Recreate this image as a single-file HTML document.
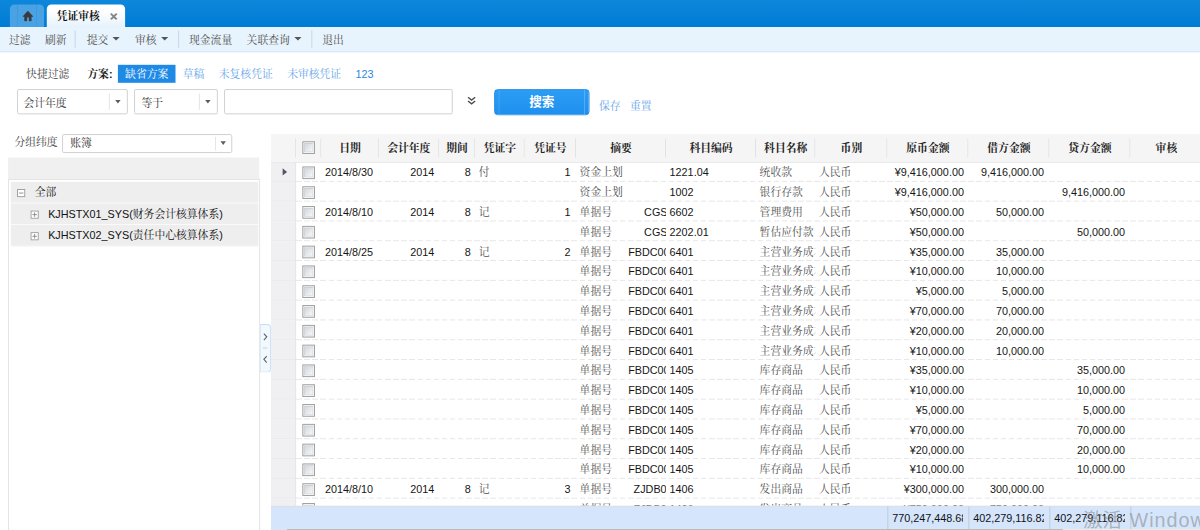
<!DOCTYPE html>
<html lang="zh-CN"><head><meta charset="utf-8"><title>凭证审核</title>
<style>
html,body{margin:0;padding:0;}
html{width:1200px;height:530px;overflow:hidden;background:#fff;}
body{width:1200px;height:530px;overflow:hidden;position:relative;}
#root{position:absolute;left:0;top:0;width:1334px;height:589px;transform:scale(0.9);transform-origin:0 0;overflow:hidden;
 font-family:"Liberation Sans","Noto Serif CJK SC",sans-serif;font-size:12px;color:#333;background:#fff;}
#root *{box-sizing:border-box;}
.abs{position:absolute;white-space:nowrap;}
.topbar{position:absolute;left:0;top:0;width:1334px;height:30px;background:linear-gradient(#0c87db,#007bd4);}
.hometab{position:absolute;left:11px;top:4.5px;width:38px;height:25.5px;background:#48a2e3;border-radius:5px 5px 0 0;}
.hometab:before,.hometab:after{content:"";position:absolute;top:0;width:1px;height:25.5px;background:rgba(0,90,180,.13);}
.hometab:before{left:8px}.hometab:after{right:8px}
.tab{position:absolute;left:51.7px;top:4.5px;width:87.3px;height:25.5px;border-radius:5px 5px 0 0;background:linear-gradient(#fff 30%,#e6f2fc);}
.tab span{position:absolute;left:11.3px;top:5.7px;font-weight:bold;color:#111;font-size:12px;line-height:16px;}
.tab svg{position:absolute;left:70.1px;top:9.2px;}
.toolbar{position:absolute;left:0;top:30px;width:1334px;height:27.8px;background:#e8f4fd;border-bottom:1px solid #d2e2f7;}
.toolbar span{position:absolute;top:0;line-height:30px;white-space:nowrap;color:#505050;}
.toolbar i.sep{position:absolute;top:3.5px;width:1px;height:19.5px;background:#c3d3e3;}
.toolbar i.dd{position:absolute;top:11px;width:0;height:0;border:4px solid transparent;border-top:4.5px solid #555;border-bottom:0;}
.f1{position:absolute;top:73px;line-height:20px;white-space:nowrap;}
.chip{color:#fff;padding:0 8px;}
.chipbg{position:absolute;left:131px;top:72px;width:64px;height:20px;background:#1e8ae6;}
.lnk{color:#68a6ea;}
.sel{position:absolute;border:1px solid #ccc;border-radius:2px;background:#fff;}
.sel span{position:absolute;left:6px;top:1.6px;white-space:nowrap;}
.sel i.s{position:absolute;top:4px;bottom:4px;right:19px;width:1px;background:#e2e2e2;}
.sel i.a{position:absolute;right:7px;top:50%;margin-top:-2px;width:0;height:0;border:3.5px solid transparent;border-top:4.5px solid #5c5c5c;border-bottom:0;}
.btn{position:absolute;left:549.4px;top:99px;width:105.2px;height:28.8px;border-radius:4px;background:linear-gradient(#2b9df5,#1e8fee);border:1px solid #1c86e0;color:#fff;font-weight:bold;font-size:14px;line-height:26.5px;text-align:center;font-family:"Liberation Sans","Noto Sans CJK SC",sans-serif;}
.btn:after{content:"";position:absolute;right:3.5px;top:0;bottom:0;width:1px;background:rgba(255,255,255,.25);}
.btn:before{content:"";position:absolute;left:4px;top:0;bottom:0;width:1px;background:rgba(255,255,255,.15);}
/* left panel */
.band{position:absolute;left:9px;top:175px;width:278.8px;height:24px;background:#f0f0f0;}
.tree{position:absolute;left:9px;top:199px;width:280.2px;height:400px;border:1px solid #e2e2e2;background:#fff;}
.tr{position:absolute;left:1.5px;right:1px;height:24px;background:#eee;border-bottom:1px solid #fbfbfb;white-space:nowrap;}
.tr span{position:absolute;top:0;line-height:25.5px;color:#111;}
.tr i{position:absolute;top:7.6px;width:9px;height:9px;border:1px solid #999;background:#fff;}
.tr i:before{content:"";position:absolute;left:1px;right:1px;top:3px;height:1px;background:#888;}
.tr i.p:after{content:"";position:absolute;top:1px;bottom:1px;left:3px;width:1px;background:#888;}
.split{position:absolute;left:288.6px;top:360.3px;width:12.6px;height:53.4px;border:1px solid #c3def7;border-left-color:#d4e8fa;border-radius:0 4px 4px 0;background:#f2f9fe;}
/* grid */
.grid{position:absolute;left:301px;top:149px;width:1040px;height:440px;overflow:hidden;}
.ghead{position:absolute;left:0;top:0;width:1040px;height:31.7px;background:#f5f5f5;border-bottom:1px solid #e9e9e9;z-index:2;}
.hc{position:absolute;top:0;height:30px;text-align:center;line-height:33.6px;font-weight:bold;color:#222;white-space:nowrap;overflow:hidden;}
.hc:after{content:"";position:absolute;right:0;top:5px;bottom:4px;width:1px;background:#e0e0e0;}
.gbody{position:absolute;left:0;top:31px;width:1040px;height:382px;overflow:hidden;}
.row{position:absolute;left:0;width:1040px;height:22px;}
.row:after{content:"";position:absolute;left:28px;right:0;bottom:0;height:1px;background:repeating-linear-gradient(90deg,#e4e4e4 0,#e4e4e4 6px,transparent 6px,transparent 9px);}
.c{position:absolute;top:0;height:22px;line-height:25.5px;padding:0 5px 0 4px;white-space:nowrap;overflow:hidden;color:#151515;}
.c.r{text-align:right}.c.l{text-align:left}
.c.ind{left:0;width:28px;background:#f0f0f3;border-right:1px solid #e4e4e4;border-bottom:1px solid #e8e8e8;padding:0;}
.c.cbc{left:28px;width:28px;padding:0;}
.cb{position:absolute;left:6.5px;top:4.7px;width:14px;height:14px;border:1px solid #98999a;background:#f4f4f4;}
.cb:after{content:"";position:absolute;left:1px;top:1px;right:1px;bottom:1px;border:1px solid #c9cdd1;border-right-color:#dde0e3;border-bottom-color:#dde0e3;background:linear-gradient(135deg,#d3d7dc,#f7f7f7);}
.hcb{top:8.3px;}
.arrow{position:absolute;left:12.5px;top:7.2px;width:0;height:0;border:4px solid transparent;border-left:5px solid #556;border-right:0;}
.zy b{position:absolute;top:0;font-weight:normal;color:#151515;}
.c.cj{color:#505050;}
.gfoot{position:absolute;left:0;top:413px;width:1040px;height:26px;background:#d4e5fc;border-top:1px solid #e0e0e0;}
.fc{position:absolute;top:0;height:25px;line-height:26.6px;padding:0 5.7px 0 4.3px;overflow:hidden;white-space:nowrap;color:#111;border-left:1px solid #bfc6d2;}
.hscroll{position:absolute;left:0;top:439px;width:1040px;height:3px;background:#e6e6e6;}
.hscroll:after{content:"";position:absolute;left:18px;top:0;width:862px;height:3px;background:#b0b0b0;}
.hscroll:before{content:"";position:absolute;left:0;top:0;width:18px;height:3px;background:#d4e5fc;}
.wm{position:absolute;left:1203.5px;top:562px;font-size:21.5px;line-height:32px;color:rgba(125,125,125,.52);white-space:nowrap;font-family:"Liberation Sans","Noto Sans CJK SC",sans-serif;}
.fc span{display:block;overflow:hidden;white-space:nowrap;}
.wm b{font-weight:normal;font-size:22px;letter-spacing:1.1px;margin-left:2.5px}

</style></head>
<body>
<div id="root">
<div class="topbar">
 <div class="hometab"><svg width="12" height="11.5" viewBox="0 0 14 12" preserveAspectRatio="none" style="position:absolute;left:13.9px;top:7.7px"><path d="M7 0 L14.2 6.9 H11.7 V12 H8.3 V7.9 H5.9 V12 H2.3 V6.9 H-0.2 Z" fill="#3a3a3a"/></svg></div>
 <div class="tab"><span>凭证审核</span><svg width="8.8" height="8.8" viewBox="0 0 8 8"><path d="M1 1 L7 7 M7 1 L1 7" stroke="#858585" stroke-width="1.9"/></svg></div>
</div>
<div class="toolbar">
 <span style="left:10px">过滤</span><span style="left:50px">刷新</span><i class="sep" style="left:83px"></i>
 <span style="left:96.3px">提交</span><i class="dd" style="left:125px"></i>
 <span style="left:150px">审核</span><i class="dd" style="left:179px"></i><i class="sep" style="left:198px"></i>
 <span style="left:210px">现金流量</span><span style="left:274px">关联查询</span><i class="dd" style="left:327px"></i><i class="sep" style="left:346px"></i>
 <span style="left:358px">退出</span>
</div>
<div class="f1" style="left:29px;color:#444">快捷过滤</div>
<div class="f1" style="left:97px;font-weight:bold;color:#222">方案:</div>
<div class="chipbg"></div>
<div class="f1" style="left:131px"><span class="chip">缺省方案</span><span class="lnk" style="padding:0 8px">草稿</span><span class="lnk" style="padding:0 8px">未复核凭证</span><span class="lnk" style="padding:0 8px">未审核凭证</span><span class="lnk" style="padding:0 8px;color:#2a88e0">123</span></div>
<div class="sel" style="left:19px;top:99px;width:123px;height:28px;line-height:26px"><span>会计年度</span><i class="s"></i><i class="a"></i></div>
<div class="sel" style="left:149px;top:99px;width:93px;height:28px;line-height:26px"><span style="left:7.3px">等于</span><i class="s"></i><i class="a"></i></div>
<div class="sel" style="left:249px;top:99px;width:254px;height:28px"></div>
<svg width="10" height="10" viewBox="0 0 10 10" style="position:absolute;left:518.7px;top:107.1px"><path d="M1 1 L5 4.2 L9 1 M1 5.2 L5 8.4 L9 5.2" fill="none" stroke="#4c4c4c" stroke-width="1.5"/></svg>
<div class="btn">搜索</div>
<div class="abs lnk" style="left:665.5px;top:108px;line-height:20px">保存</div>
<div class="abs lnk" style="left:700px;top:108px;line-height:20px">重置</div>
<div class="abs" style="left:16px;top:147.5px;line-height:20px;color:#444">分组纬度</div>
<div class="sel" style="left:69px;top:149px;width:189px;height:20.5px;line-height:18px"><span style="left:8px;top:0.3px">账簿</span><i class="s" style="top:2px;bottom:2px;right:17.5px"></i><i class="a" style="right:6.2px"></i></div>
<div class="band"></div>
<div class="tree">
 <div class="tr" style="top:2.4px"><i style="left:7px"></i><span style="left:27px">全部</span></div>
 <div class="tr" style="top:26.4px"><i class="p" style="left:22px"></i><span style="left:42px">KJHSTX01_SYS(财务会计核算体系)</span></div>
 <div class="tr" style="top:50.4px"><i class="p" style="left:22px"></i><span style="left:42px">KJHSTX02_SYS(责任中心核算体系)</span></div>
</div>
<div class="split"><svg width="11" height="52" viewBox="0 0 11 52" style="position:absolute;left:0;top:0"><path d="M3.2 9.8 L6.4 13.3 L3.2 16.8" fill="none" stroke="#666" stroke-width="1.3"/><path d="M6.4 34.8 L3.2 38.3 L6.4 41.8" fill="none" stroke="#666" stroke-width="1.3"/><path d="M2 25.7 H7" stroke="#c8c8c8" stroke-width="1"/></svg></div>
<div class="grid">
<div class="ghead"><div class="hc ind" style="left:0px;width:28px"></div><div class="hc" style="left:28px;width:28px"><i class="cb hcb"></i></div><div class="hc" style="left:56px;width:64px"><span>日期</span></div><div class="hc" style="left:120px;width:66.5px"><span>会计年度</span></div><div class="hc" style="left:186.5px;width:40.5px"><span>期间</span></div><div class="hc" style="left:227.0px;width:55px"><span>凭证字</span></div><div class="hc" style="left:282.0px;width:57px"><span>凭证号</span></div><div class="hc" style="left:339.0px;width:100px"><span>摘要</span></div><div class="hc" style="left:439.0px;width:100px"><span>科目编码</span></div><div class="hc" style="left:539.0px;width:66px"><span>科目名称</span></div><div class="hc" style="left:605.0px;width:80px"><span>币别</span></div><div class="hc" style="left:685.0px;width:90px"><span>原币金额</span></div><div class="hc" style="left:775.0px;width:90px"><span>借方金额</span></div><div class="hc" style="left:865.0px;width:90px"><span>贷方金额</span></div><div class="hc" style="left:955.0px;width:80px"><span>审核</span></div></div>
<div class="gbody">
<div class="row" style="top:0px"><div class="c ind"><i class="arrow"></i></div><div class="c cbc"><i class="cb"></i></div><div class="c l" style="left:56px;width:64px">2014/8/30</div><div class="c r" style="left:120px;width:66.5px">2014</div><div class="c r" style="left:186.5px;width:40.5px">8</div><div class="c l cj" style="left:227.0px;width:55px">付</div><div class="c r" style="left:282.0px;width:57px;padding-right:6px">1</div><div class="c l zy cj" style="left:339.0px;width:100px">资金上划</div><div class="c l" style="left:439.0px;width:100px">1221.04</div><div class="c l cj" style="left:539.0px;width:66px">统收款</div><div class="c l cj" style="left:605.0px;width:80px">人民币</div><div class="c r" style="left:685.0px;width:90px">¥9,416,000.00</div><div class="c r" style="left:775.0px;width:90px;padding-right:6px">9,416,000.00</div><div class="c r" style="left:865.0px;width:90px;padding-right:6px"></div><div class="c l" style="left:955.0px;width:80px"></div></div>
<div class="row" style="top:22px"><div class="c ind"></div><div class="c cbc"><i class="cb"></i></div><div class="c l" style="left:56px;width:64px"></div><div class="c r" style="left:120px;width:66.5px"></div><div class="c r" style="left:186.5px;width:40.5px"></div><div class="c l cj" style="left:227.0px;width:55px"></div><div class="c r" style="left:282.0px;width:57px;padding-right:6px"></div><div class="c l zy cj" style="left:339.0px;width:100px">资金上划</div><div class="c l" style="left:439.0px;width:100px">1002</div><div class="c l cj" style="left:539.0px;width:66px">银行存款</div><div class="c l cj" style="left:605.0px;width:80px">人民币</div><div class="c r" style="left:685.0px;width:90px">¥9,416,000.00</div><div class="c r" style="left:775.0px;width:90px;padding-right:6px"></div><div class="c r" style="left:865.0px;width:90px;padding-right:6px">9,416,000.00</div><div class="c l" style="left:955.0px;width:80px"></div></div>
<div class="row" style="top:44px"><div class="c ind"></div><div class="c cbc"><i class="cb"></i></div><div class="c l" style="left:56px;width:64px">2014/8/10</div><div class="c r" style="left:120px;width:66.5px">2014</div><div class="c r" style="left:186.5px;width:40.5px">8</div><div class="c l cj" style="left:227.0px;width:55px">记</div><div class="c r" style="left:282.0px;width:57px;padding-right:6px">1</div><div class="c l zy cj" style="left:339.0px;width:100px">单据号<b style="left:75.7px">CGS20140</b></div><div class="c l" style="left:439.0px;width:100px">6602</div><div class="c l cj" style="left:539.0px;width:66px">管理费用</div><div class="c l cj" style="left:605.0px;width:80px">人民币</div><div class="c r" style="left:685.0px;width:90px">¥50,000.00</div><div class="c r" style="left:775.0px;width:90px;padding-right:6px">50,000.00</div><div class="c r" style="left:865.0px;width:90px;padding-right:6px"></div><div class="c l" style="left:955.0px;width:80px"></div></div>
<div class="row" style="top:66px"><div class="c ind"></div><div class="c cbc"><i class="cb"></i></div><div class="c l" style="left:56px;width:64px"></div><div class="c r" style="left:120px;width:66.5px"></div><div class="c r" style="left:186.5px;width:40.5px"></div><div class="c l cj" style="left:227.0px;width:55px"></div><div class="c r" style="left:282.0px;width:57px;padding-right:6px"></div><div class="c l zy cj" style="left:339.0px;width:100px">单据号<b style="left:75.7px">CGS20140</b></div><div class="c l" style="left:439.0px;width:100px">2202.01</div><div class="c l cj" style="left:539.0px;width:66px">暂估应付款</div><div class="c l cj" style="left:605.0px;width:80px">人民币</div><div class="c r" style="left:685.0px;width:90px">¥50,000.00</div><div class="c r" style="left:775.0px;width:90px;padding-right:6px"></div><div class="c r" style="left:865.0px;width:90px;padding-right:6px">50,000.00</div><div class="c l" style="left:955.0px;width:80px"></div></div>
<div class="row" style="top:88px"><div class="c ind"></div><div class="c cbc"><i class="cb"></i></div><div class="c l" style="left:56px;width:64px">2014/8/25</div><div class="c r" style="left:120px;width:66.5px">2014</div><div class="c r" style="left:186.5px;width:40.5px">8</div><div class="c l cj" style="left:227.0px;width:55px">记</div><div class="c r" style="left:282.0px;width:57px;padding-right:6px">2</div><div class="c l zy cj" style="left:339.0px;width:100px">单据号<b style="left:58px">FBDC001</b></div><div class="c l" style="left:439.0px;width:100px">6401</div><div class="c l cj" style="left:539.0px;width:66px">主营业务成本</div><div class="c l cj" style="left:605.0px;width:80px">人民币</div><div class="c r" style="left:685.0px;width:90px">¥35,000.00</div><div class="c r" style="left:775.0px;width:90px;padding-right:6px">35,000.00</div><div class="c r" style="left:865.0px;width:90px;padding-right:6px"></div><div class="c l" style="left:955.0px;width:80px"></div></div>
<div class="row" style="top:110px"><div class="c ind"></div><div class="c cbc"><i class="cb"></i></div><div class="c l" style="left:56px;width:64px"></div><div class="c r" style="left:120px;width:66.5px"></div><div class="c r" style="left:186.5px;width:40.5px"></div><div class="c l cj" style="left:227.0px;width:55px"></div><div class="c r" style="left:282.0px;width:57px;padding-right:6px"></div><div class="c l zy cj" style="left:339.0px;width:100px">单据号<b style="left:58px">FBDC001</b></div><div class="c l" style="left:439.0px;width:100px">6401</div><div class="c l cj" style="left:539.0px;width:66px">主营业务成本</div><div class="c l cj" style="left:605.0px;width:80px">人民币</div><div class="c r" style="left:685.0px;width:90px">¥10,000.00</div><div class="c r" style="left:775.0px;width:90px;padding-right:6px">10,000.00</div><div class="c r" style="left:865.0px;width:90px;padding-right:6px"></div><div class="c l" style="left:955.0px;width:80px"></div></div>
<div class="row" style="top:132px"><div class="c ind"></div><div class="c cbc"><i class="cb"></i></div><div class="c l" style="left:56px;width:64px"></div><div class="c r" style="left:120px;width:66.5px"></div><div class="c r" style="left:186.5px;width:40.5px"></div><div class="c l cj" style="left:227.0px;width:55px"></div><div class="c r" style="left:282.0px;width:57px;padding-right:6px"></div><div class="c l zy cj" style="left:339.0px;width:100px">单据号<b style="left:58px">FBDC001</b></div><div class="c l" style="left:439.0px;width:100px">6401</div><div class="c l cj" style="left:539.0px;width:66px">主营业务成本</div><div class="c l cj" style="left:605.0px;width:80px">人民币</div><div class="c r" style="left:685.0px;width:90px">¥5,000.00</div><div class="c r" style="left:775.0px;width:90px;padding-right:6px">5,000.00</div><div class="c r" style="left:865.0px;width:90px;padding-right:6px"></div><div class="c l" style="left:955.0px;width:80px"></div></div>
<div class="row" style="top:154px"><div class="c ind"></div><div class="c cbc"><i class="cb"></i></div><div class="c l" style="left:56px;width:64px"></div><div class="c r" style="left:120px;width:66.5px"></div><div class="c r" style="left:186.5px;width:40.5px"></div><div class="c l cj" style="left:227.0px;width:55px"></div><div class="c r" style="left:282.0px;width:57px;padding-right:6px"></div><div class="c l zy cj" style="left:339.0px;width:100px">单据号<b style="left:58px">FBDC001</b></div><div class="c l" style="left:439.0px;width:100px">6401</div><div class="c l cj" style="left:539.0px;width:66px">主营业务成本</div><div class="c l cj" style="left:605.0px;width:80px">人民币</div><div class="c r" style="left:685.0px;width:90px">¥70,000.00</div><div class="c r" style="left:775.0px;width:90px;padding-right:6px">70,000.00</div><div class="c r" style="left:865.0px;width:90px;padding-right:6px"></div><div class="c l" style="left:955.0px;width:80px"></div></div>
<div class="row" style="top:176px"><div class="c ind"></div><div class="c cbc"><i class="cb"></i></div><div class="c l" style="left:56px;width:64px"></div><div class="c r" style="left:120px;width:66.5px"></div><div class="c r" style="left:186.5px;width:40.5px"></div><div class="c l cj" style="left:227.0px;width:55px"></div><div class="c r" style="left:282.0px;width:57px;padding-right:6px"></div><div class="c l zy cj" style="left:339.0px;width:100px">单据号<b style="left:58px">FBDC001</b></div><div class="c l" style="left:439.0px;width:100px">6401</div><div class="c l cj" style="left:539.0px;width:66px">主营业务成本</div><div class="c l cj" style="left:605.0px;width:80px">人民币</div><div class="c r" style="left:685.0px;width:90px">¥20,000.00</div><div class="c r" style="left:775.0px;width:90px;padding-right:6px">20,000.00</div><div class="c r" style="left:865.0px;width:90px;padding-right:6px"></div><div class="c l" style="left:955.0px;width:80px"></div></div>
<div class="row" style="top:198px"><div class="c ind"></div><div class="c cbc"><i class="cb"></i></div><div class="c l" style="left:56px;width:64px"></div><div class="c r" style="left:120px;width:66.5px"></div><div class="c r" style="left:186.5px;width:40.5px"></div><div class="c l cj" style="left:227.0px;width:55px"></div><div class="c r" style="left:282.0px;width:57px;padding-right:6px"></div><div class="c l zy cj" style="left:339.0px;width:100px">单据号<b style="left:58px">FBDC001</b></div><div class="c l" style="left:439.0px;width:100px">6401</div><div class="c l cj" style="left:539.0px;width:66px">主营业务成本</div><div class="c l cj" style="left:605.0px;width:80px">人民币</div><div class="c r" style="left:685.0px;width:90px">¥10,000.00</div><div class="c r" style="left:775.0px;width:90px;padding-right:6px">10,000.00</div><div class="c r" style="left:865.0px;width:90px;padding-right:6px"></div><div class="c l" style="left:955.0px;width:80px"></div></div>
<div class="row" style="top:220px"><div class="c ind"></div><div class="c cbc"><i class="cb"></i></div><div class="c l" style="left:56px;width:64px"></div><div class="c r" style="left:120px;width:66.5px"></div><div class="c r" style="left:186.5px;width:40.5px"></div><div class="c l cj" style="left:227.0px;width:55px"></div><div class="c r" style="left:282.0px;width:57px;padding-right:6px"></div><div class="c l zy cj" style="left:339.0px;width:100px">单据号<b style="left:58px">FBDC001</b></div><div class="c l" style="left:439.0px;width:100px">1405</div><div class="c l cj" style="left:539.0px;width:66px">库存商品</div><div class="c l cj" style="left:605.0px;width:80px">人民币</div><div class="c r" style="left:685.0px;width:90px">¥35,000.00</div><div class="c r" style="left:775.0px;width:90px;padding-right:6px"></div><div class="c r" style="left:865.0px;width:90px;padding-right:6px">35,000.00</div><div class="c l" style="left:955.0px;width:80px"></div></div>
<div class="row" style="top:242px"><div class="c ind"></div><div class="c cbc"><i class="cb"></i></div><div class="c l" style="left:56px;width:64px"></div><div class="c r" style="left:120px;width:66.5px"></div><div class="c r" style="left:186.5px;width:40.5px"></div><div class="c l cj" style="left:227.0px;width:55px"></div><div class="c r" style="left:282.0px;width:57px;padding-right:6px"></div><div class="c l zy cj" style="left:339.0px;width:100px">单据号<b style="left:58px">FBDC001</b></div><div class="c l" style="left:439.0px;width:100px">1405</div><div class="c l cj" style="left:539.0px;width:66px">库存商品</div><div class="c l cj" style="left:605.0px;width:80px">人民币</div><div class="c r" style="left:685.0px;width:90px">¥10,000.00</div><div class="c r" style="left:775.0px;width:90px;padding-right:6px"></div><div class="c r" style="left:865.0px;width:90px;padding-right:6px">10,000.00</div><div class="c l" style="left:955.0px;width:80px"></div></div>
<div class="row" style="top:264px"><div class="c ind"></div><div class="c cbc"><i class="cb"></i></div><div class="c l" style="left:56px;width:64px"></div><div class="c r" style="left:120px;width:66.5px"></div><div class="c r" style="left:186.5px;width:40.5px"></div><div class="c l cj" style="left:227.0px;width:55px"></div><div class="c r" style="left:282.0px;width:57px;padding-right:6px"></div><div class="c l zy cj" style="left:339.0px;width:100px">单据号<b style="left:58px">FBDC001</b></div><div class="c l" style="left:439.0px;width:100px">1405</div><div class="c l cj" style="left:539.0px;width:66px">库存商品</div><div class="c l cj" style="left:605.0px;width:80px">人民币</div><div class="c r" style="left:685.0px;width:90px">¥5,000.00</div><div class="c r" style="left:775.0px;width:90px;padding-right:6px"></div><div class="c r" style="left:865.0px;width:90px;padding-right:6px">5,000.00</div><div class="c l" style="left:955.0px;width:80px"></div></div>
<div class="row" style="top:286px"><div class="c ind"></div><div class="c cbc"><i class="cb"></i></div><div class="c l" style="left:56px;width:64px"></div><div class="c r" style="left:120px;width:66.5px"></div><div class="c r" style="left:186.5px;width:40.5px"></div><div class="c l cj" style="left:227.0px;width:55px"></div><div class="c r" style="left:282.0px;width:57px;padding-right:6px"></div><div class="c l zy cj" style="left:339.0px;width:100px">单据号<b style="left:58px">FBDC001</b></div><div class="c l" style="left:439.0px;width:100px">1405</div><div class="c l cj" style="left:539.0px;width:66px">库存商品</div><div class="c l cj" style="left:605.0px;width:80px">人民币</div><div class="c r" style="left:685.0px;width:90px">¥70,000.00</div><div class="c r" style="left:775.0px;width:90px;padding-right:6px"></div><div class="c r" style="left:865.0px;width:90px;padding-right:6px">70,000.00</div><div class="c l" style="left:955.0px;width:80px"></div></div>
<div class="row" style="top:308px"><div class="c ind"></div><div class="c cbc"><i class="cb"></i></div><div class="c l" style="left:56px;width:64px"></div><div class="c r" style="left:120px;width:66.5px"></div><div class="c r" style="left:186.5px;width:40.5px"></div><div class="c l cj" style="left:227.0px;width:55px"></div><div class="c r" style="left:282.0px;width:57px;padding-right:6px"></div><div class="c l zy cj" style="left:339.0px;width:100px">单据号<b style="left:58px">FBDC001</b></div><div class="c l" style="left:439.0px;width:100px">1405</div><div class="c l cj" style="left:539.0px;width:66px">库存商品</div><div class="c l cj" style="left:605.0px;width:80px">人民币</div><div class="c r" style="left:685.0px;width:90px">¥20,000.00</div><div class="c r" style="left:775.0px;width:90px;padding-right:6px"></div><div class="c r" style="left:865.0px;width:90px;padding-right:6px">20,000.00</div><div class="c l" style="left:955.0px;width:80px"></div></div>
<div class="row" style="top:330px"><div class="c ind"></div><div class="c cbc"><i class="cb"></i></div><div class="c l" style="left:56px;width:64px"></div><div class="c r" style="left:120px;width:66.5px"></div><div class="c r" style="left:186.5px;width:40.5px"></div><div class="c l cj" style="left:227.0px;width:55px"></div><div class="c r" style="left:282.0px;width:57px;padding-right:6px"></div><div class="c l zy cj" style="left:339.0px;width:100px">单据号<b style="left:58px">FBDC001</b></div><div class="c l" style="left:439.0px;width:100px">1405</div><div class="c l cj" style="left:539.0px;width:66px">库存商品</div><div class="c l cj" style="left:605.0px;width:80px">人民币</div><div class="c r" style="left:685.0px;width:90px">¥10,000.00</div><div class="c r" style="left:775.0px;width:90px;padding-right:6px"></div><div class="c r" style="left:865.0px;width:90px;padding-right:6px">10,000.00</div><div class="c l" style="left:955.0px;width:80px"></div></div>
<div class="row" style="top:352px"><div class="c ind"></div><div class="c cbc"><i class="cb"></i></div><div class="c l" style="left:56px;width:64px">2014/8/10</div><div class="c r" style="left:120px;width:66.5px">2014</div><div class="c r" style="left:186.5px;width:40.5px">8</div><div class="c l cj" style="left:227.0px;width:55px">记</div><div class="c r" style="left:282.0px;width:57px;padding-right:6px">3</div><div class="c l zy cj" style="left:339.0px;width:100px">单据号<b style="left:64px">ZJDB001</b></div><div class="c l" style="left:439.0px;width:100px">1406</div><div class="c l cj" style="left:539.0px;width:66px">发出商品</div><div class="c l cj" style="left:605.0px;width:80px">人民币</div><div class="c r" style="left:685.0px;width:90px">¥300,000.00</div><div class="c r" style="left:775.0px;width:90px;padding-right:6px">300,000.00</div><div class="c r" style="left:865.0px;width:90px;padding-right:6px"></div><div class="c l" style="left:955.0px;width:80px"></div></div>
<div class="row" style="top:374px"><div class="c ind"></div><div class="c cbc"><i class="cb"></i></div><div class="c l" style="left:56px;width:64px"></div><div class="c r" style="left:120px;width:66.5px"></div><div class="c r" style="left:186.5px;width:40.5px"></div><div class="c l cj" style="left:227.0px;width:55px"></div><div class="c r" style="left:282.0px;width:57px;padding-right:6px"></div><div class="c l zy cj" style="left:339.0px;width:100px">单据号<b style="left:64px">ZJDB001</b></div><div class="c l" style="left:439.0px;width:100px">1406</div><div class="c l cj" style="left:539.0px;width:66px">发出商品</div><div class="c l cj" style="left:605.0px;width:80px">人民币</div><div class="c r" style="left:685.0px;width:90px">¥750,000.00</div><div class="c r" style="left:775.0px;width:90px;padding-right:6px">750,000.00</div><div class="c r" style="left:865.0px;width:90px;padding-right:6px"></div><div class="c l" style="left:955.0px;width:80px"></div></div>
</div>
<div class="gfoot"><div class="fc" style="left:685.0px;width:90px"><span>770,247,448.68</span></div><div class="fc" style="left:775.0px;width:90px"><span>402,279,116.82</span></div><div class="fc" style="left:865.0px;width:90px"><span>402,279,116.82</span></div><div class="fc" style="left:955.0px;width:90px"></div></div>
<div class="hscroll"></div>
</div>
<div class="wm">激活 <b>Windows</b></div>
</div>
</body></html>
